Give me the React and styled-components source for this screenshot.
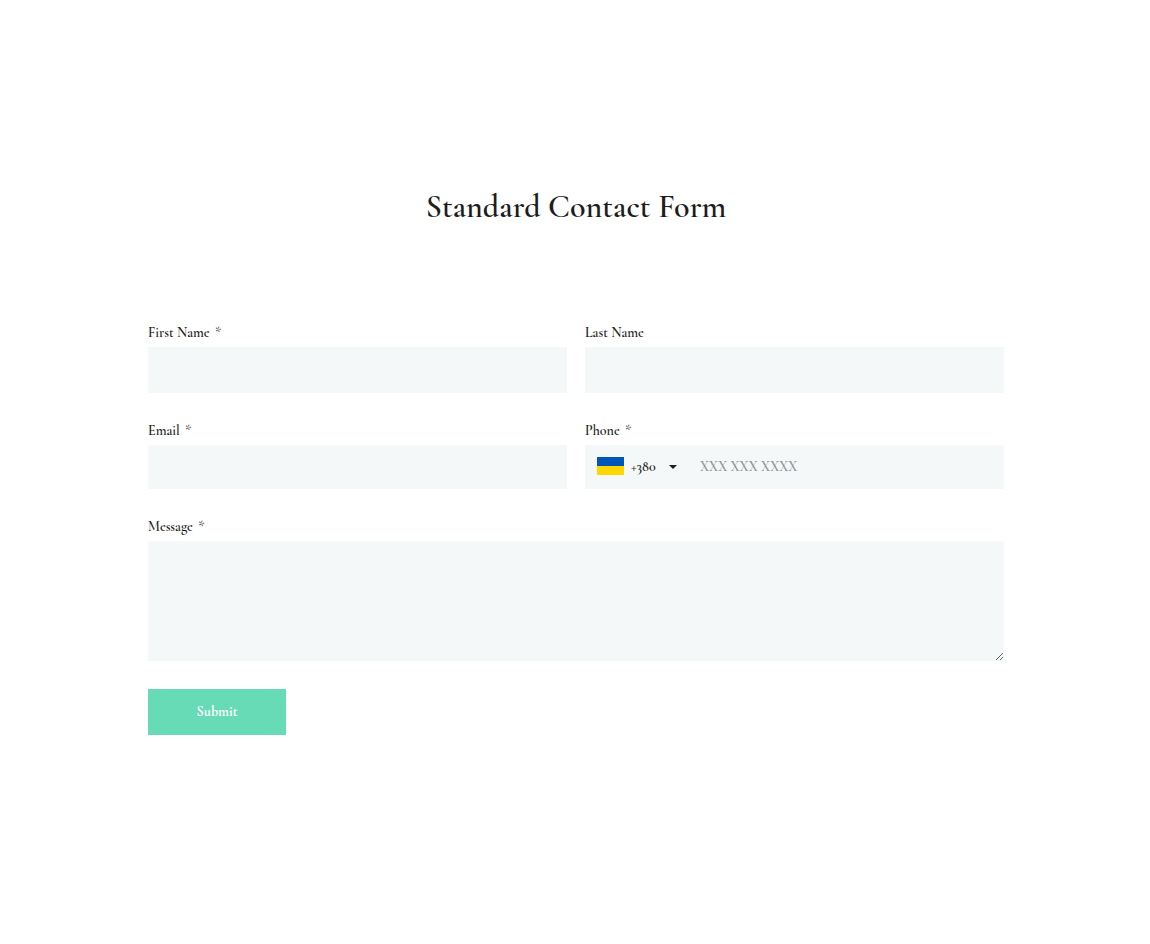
import React from "react";
import styled, { createGlobalStyle } from "styled-components";

const GlobalStyle = createGlobalStyle`
  *, *::before, *::after { box-sizing: border-box; }
  body {
    margin: 0;
    background: #fff;
    color: #1d1d1d;
    font-family: "Cormorant Garamond", Cormorant, "Liberation Serif", serif;
  }
`;

const Page = styled.main`
  max-width: 858px;
  margin: 0 auto;
  padding: 184px 0 184px 2px;
`;

const Title = styled.h1`
  margin: 0 0 93px;
  font-size: 32px;
  line-height: 46px;
  font-weight: 600;
  text-align: center;
`;

const Form = styled.form`
  display: flex;
  flex-direction: column;
  align-items: stretch;
  gap: 28px;
`;

const Row = styled.div`
  display: grid;
  grid-template-columns: 1fr 1fr;
  gap: 18px;
`;

const Field = styled.div`
  display: flex;
  flex-direction: column;
  gap: 4px;
  min-width: 0;
`;

const Label = styled.label`
  font-size: 14px;
  line-height: 20px;
  font-weight: 600;
`;

const Required = styled.span`
  margin-left: 2px;
  font-weight: 400;
`;

const Input = styled.input`
  width: 100%;
  height: ${(p) => (p.$compact ? 44 : 46)}px;
  padding: 0 12px;
  border: 0;
  border-radius: 0;
  background: #f4f8f9;
  color: inherit;
  font: inherit;
  font-size: 14px;
`;

const PhoneBox = styled.div`
  display: flex;
  align-items: center;
  height: 44px;
  padding: 0 12px 2px;
  background: #f4f8f9;
`;

const Flag = styled.svg`
  flex: none;
  width: 27px;
  height: 18px;
  margin-right: 7px;
`;

const CodePicker = styled.div`
  position: relative;
  flex: none;
  width: 46px;
  margin-right: 23px;
`;

const CodeSelect = styled.select`
  display: block;
  appearance: none;
  width: 100%;
  height: 24px;
  padding: 0;
  border: 0;
  background: transparent;
  color: inherit;
  font: inherit;
  font-size: 14px;
  font-weight: 600;
`;

const Caret = styled.svg`
  position: absolute;
  top: 11px;
  right: 0;
  width: 8px;
  height: 4px;
  pointer-events: none;
`;

const PhoneInput = styled.input`
  flex: 1;
  min-width: 0;
  height: 100%;
  padding: 0;
  border: 0;
  background: transparent;
  color: inherit;
  font: inherit;
  font-size: 14px;
  font-weight: 600;

  &::placeholder {
    color: #929596;
    opacity: 1;
  }
`;

const TextArea = styled.textarea`
  display: block;
  width: 100%;
  height: 120px;
  padding: 12px;
  border: 0;
  border-radius: 0;
  background: #f4f8f9;
  color: inherit;
  font: inherit;
  font-size: 14px;
  resize: vertical;
`;

const Submit = styled.button`
  align-self: flex-start;
  width: 138px;
  height: 46px;
  padding: 0 0 2px;
  border: 0;
  background: #67dbb6;
  color: #fff;
  font: inherit;
  font-size: 14px;
  font-weight: 700;
  cursor: pointer;
`;

function FieldLabel({ htmlFor, required, children }) {
  return (
    <Label htmlFor={htmlFor}>
      {children}
      {required && <> <Required>*</Required></>}
    </Label>
  );
}

function TextField({ id, label, compact, required, type }) {
  return (
    <Field>
      <FieldLabel htmlFor={id} required={required}>{label}</FieldLabel>
      <Input id={id} name={id} type={type} $compact={compact} required={required} />
    </Field>
  );
}

function PhoneField() {
  return (
    <Field>
      <FieldLabel htmlFor="phone" required>Phone</FieldLabel>
      <PhoneBox>
        <Flag viewBox="0 0 27 18" aria-hidden="true">
          <rect width="27" height="9" fill="#0057b8" />
          <rect y="9" width="27" height="9" fill="#ffd700" />
        </Flag>
        <CodePicker>
          <CodeSelect aria-label="Country code" defaultValue="+380">
            <option>+380</option>
          </CodeSelect>
          <Caret viewBox="0 0 8 4" aria-hidden="true">
            <path d="M0 0h8L4 4z" fill="#1d1d1d" />
          </Caret>
        </CodePicker>
        <PhoneInput id="phone" name="phone" type="tel" placeholder="XXX XXX XXXX" required />
      </PhoneBox>
    </Field>
  );
}

export default function App() {
  return (
    <>
      <GlobalStyle />
      <Page>
        <Title>Standard Contact Form</Title>
        <Form onSubmit={(e) => e.preventDefault()}>
          <Row>
            <TextField id="firstName" label="First Name" type="text" required />
            <TextField id="lastName" label="Last Name" type="text" />
          </Row>
          <Row>
            <TextField id="email" label="Email" type="email" compact required />
            <PhoneField />
          </Row>
          <Field>
            <FieldLabel htmlFor="message" required>Message</FieldLabel>
            <TextArea id="message" name="message" required />
          </Field>
          <Submit type="submit">Submit</Submit>
        </Form>
      </Page>
    </>
  );
}
